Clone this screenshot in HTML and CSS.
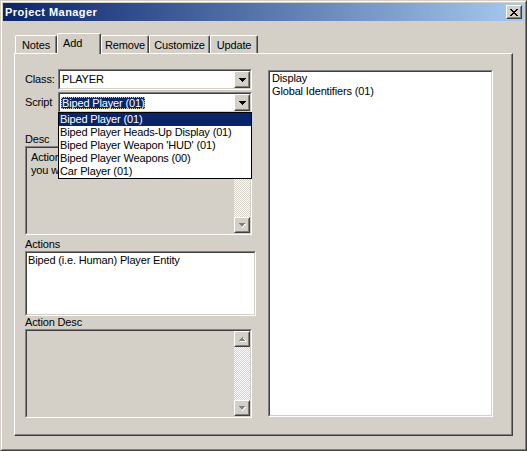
FILE: index.html
```html
<!DOCTYPE html>
<html>
<head>
<meta charset="utf-8">
<title>Project Manager</title>
<link rel="stylesheet" href="styles.css">
</head>
<body>
<div class="window">
  <div class="frame">
    <div class="titlebar">
      <span class="title">Project Manager</span>
      <div class="btn close">
        <div class="btn-in">
          <svg width="8" height="7" viewBox="0 0 8 7" shape-rendering="crispEdges"><path fill="#000" d="M0 0h2v1H0zM6 0h2v1H6zM1 1h2v1H1zM5 1h2v1H5zM2 2h4v1H2zM3 3h2v1H3zM2 4h4v1H2zM1 5h2v1H1zM5 5h2v1H5zM0 6h2v1H0zM6 6h2v1H6z"/></svg>
        </div>
      </div>
    </div>
    <div class="client">
      <div class="tabs">
        <div class="tab t-notes">Notes</div>
        <div class="tab t-add active">Add</div>
        <div class="tab t-remove">Remove</div>
        <div class="tab t-custom">Customize</div>
        <div class="tab t-update">Update</div>
      </div>
      <div class="panel">
        <div class="leftcol">
          <div class="row">
            <span class="lbl">Class:</span>
            <div class="combo">
              <div class="sunk-in white combo-in">
                <span class="combo-text">PLAYER</span>
                <div class="btn dropbtn">
                  <div class="btn-in">
                    <svg width="7" height="4" viewBox="0 0 7 4" shape-rendering="crispEdges"><path fill="#000" d="M0 0h7v1H0zM1 1h5v1H1zM2 2h3v1H2zM3 3h1v1H3z"/></svg>
                  </div>
                </div>
              </div>
            </div>
          </div>
          <div class="row row-script">
            <span class="lbl">Script</span>
            <div class="combo">
              <div class="sunk-in white combo-in">
                <span class="combo-text"><span class="sel">Biped Player (01)</span></span>
                <div class="btn dropbtn">
                  <div class="btn-in">
                    <svg width="7" height="4" viewBox="0 0 7 4" shape-rendering="crispEdges"><path fill="#000" d="M0 0h7v1H0zM1 1h5v1H1zM2 2h3v1H2zM3 3h1v1H3z"/></svg>
                  </div>
                </div>
              </div>
            </div>
            <div class="dropdown">
              <div class="item hl">Biped Player (01)</div>
              <div class="item">Biped Player Heads-Up Display (01)</div>
              <div class="item">Biped Player Weapon 'HUD' (01)</div>
              <div class="item">Biped Player Weapons (00)</div>
              <div class="item">Car Player (01)</div>
            </div>
          </div>

          <div class="label l-desc">Desc</div>
          <div class="sunk box-desc">
            <div class="sunk-in gray split">
              <div class="edit-area">Action<br>you w</div>
              <div class="vscroll">
                <div class="btn sbtn">
                  <div class="btn-in">
                    <svg width="7" height="5" viewBox="0 0 7 5" shape-rendering="crispEdges"><path fill="#fff" d="M4 1h1v1H4zM5 2h1v1H5zM6 3h1v1H6zM1 4h6v1H1z"/><path fill="#808080" d="M3 0h1v1H3zM2 1h2v1H2zM1 2h4v1H1zM0 3h6v1H0z"/></svg>
                  </div>
                </div>
                <div class="track"></div>
                <div class="btn sbtn">
                  <div class="btn-in">
                    <svg width="7" height="5" viewBox="0 0 7 5" shape-rendering="crispEdges"><path fill="#fff" d="M1 1h6v1H1zM6 1h1v1H6zM5 2h1v1H5zM4 3h1v1H4zM3 4h1v1H3z"/><path fill="#808080" d="M0 0h6v1H0zM1 1h4v1H1zM2 2h2v1H2z"/></svg>
                  </div>
                </div>
              </div>
            </div>
          </div>

          <div class="label l-actions">Actions</div>
          <div class="sunk box-actions">
            <div class="sunk-in white list-text actions-text">Biped (i.e. Human) Player Entity</div>
          </div>

          <div class="label l-adesc">Action Desc</div>
          <div class="sunk box-desc">
            <div class="sunk-in gray split">
              <div class="edit-area"></div>
              <div class="vscroll">
                <div class="btn sbtn">
                  <div class="btn-in">
                    <svg width="7" height="5" viewBox="0 0 7 5" shape-rendering="crispEdges"><path fill="#fff" d="M4 1h1v1H4zM5 2h1v1H5zM6 3h1v1H6zM1 4h6v1H1z"/><path fill="#808080" d="M3 0h1v1H3zM2 1h2v1H2zM1 2h4v1H1zM0 3h6v1H0z"/></svg>
                  </div>
                </div>
                <div class="track"></div>
                <div class="btn sbtn">
                  <div class="btn-in">
                    <svg width="7" height="5" viewBox="0 0 7 5" shape-rendering="crispEdges"><path fill="#fff" d="M1 1h6v1H1zM6 1h1v1H6zM5 2h1v1H5zM4 3h1v1H4zM3 4h1v1H3z"/><path fill="#808080" d="M0 0h6v1H0zM1 1h4v1H1zM2 2h2v1H2z"/></svg>
                  </div>
                </div>
              </div>
            </div>
          </div>
        </div>

        <div class="rightcol">
          <div class="sunk box-list">
            <div class="sunk-in white list-text right-text">Display<br>Global Identifiers (01)</div>
          </div>
        </div>
      </div>
    </div>
  </div>
</div>
</body>
</html>
```

FILE: styles.css
```css
* { box-sizing: border-box; }

html, body {
  margin: 0;
  padding: 0;
  background: #d4d0c8;
}

body {
  font-family: "Liberation Sans", Arial, sans-serif;
  font-size: 11px;
  line-height: 13px;
  letter-spacing: -0.15px;
  color: #000;
}

.window {
  width: 527px;
  height: 451px;
  border: 1px solid;
  border-color: #d4d0c8 #404040 #404040 #d4d0c8;
  background: #d4d0c8;
}

.frame {
  height: 100%;
  border: 1px solid;
  border-color: #fff #808080 #808080 #fff;
  padding: 1px;
}

.titlebar {
  height: 18px;
  display: flex;
  justify-content: space-between;
  align-items: flex-start;
  background: linear-gradient(to right, #0a246a, #a6caf0);
}

.title {
  color: #fff;
  font-weight: bold;
  padding: 3px 0 0 2px;
  letter-spacing: 0.45px;
}

/* raised button */
.btn {
  border: 1px solid;
  border-color: #fff #404040 #404040 #fff;
  background: #d4d0c8;
}
.btn-in {
  width: 100%;
  height: 100%;
  border: 1px solid;
  border-color: #d4d0c8 #808080 #808080 #d4d0c8;
  display: flex;
  align-items: center;
  justify-content: center;
}
.btn svg { display: block; }

.close {
  width: 16px;
  height: 14px;
  margin: 2px 2px 0 0;
}

.client {
  padding: 12px 11px 0 11px;
}

.tabs {
  height: 20px;
  display: flex;
  align-items: flex-end;
  padding-left: 1px;
}

.tab {
  height: 18px;
  border-top: 1px solid #fff;
  border-left: 1px solid #fff;
  border-right: 1px solid #404040;
  box-shadow: inset -1px 0 #808080;
  border-radius: 2px 2px 0 0;
  padding-top: 3px;
  text-align: center;
  background: #d4d0c8;
}
.t-notes { width: 42px; }
.t-add { width: 44px; }
.t-remove { width: 48px; }
.t-custom { width: 61px; }
.t-update { width: 48px; }

.tab.active {
  height: 21px;
  margin-bottom: -1px;
  position: relative;
  z-index: 1;
  text-align: left;
  padding-left: 5px;
}

.panel {
  width: 499px;
  height: 383px;
  border-top: 1px solid #fff;
  border-left: 1px solid #fff;
  border-right: 1px solid #404040;
  border-bottom: 1px solid #404040;
  box-shadow: inset -1px -1px #808080;
  padding: 15px 0 0 10px;
  display: flex;
  gap: 12px;
  align-items: flex-start;
}

.leftcol {
  width: 231px;
  display: flex;
  flex-direction: column;
  align-items: flex-start;
}

.row {
  display: flex;
  align-items: center;
  height: 21px;
  width: 100%;
}
.row-script {
  margin-top: 2px;
  position: relative;
}
.lbl { width: 33px; }

/* sunken box */
.sunk, .combo {
  border: 1px solid;
  border-color: #808080 #fff #fff #808080;
}
.sunk-in {
  width: 100%;
  height: 100%;
  border: 1px solid;
  border-color: #404040 #d4d0c8 #d4d0c8 #404040;
}
.white { background: #fff; }
.gray { background: #d4d0c8; }

.combo {
  width: 194px;
  height: 21px;
}
.combo-in {
  display: flex;
  align-items: stretch;
}
.combo-text {
  flex: 1;
  padding-left: 2px;
  display: flex;
  align-items: center;
  white-space: nowrap;
}
.sel {
  background: #0a246a;
  color: #fff;
  padding: 0 1px;
  line-height: 12px;
  margin-left: -1px;
  outline: 1px dotted #c8c8a0;
  outline-offset: -1px;
}
.dropbtn {
  width: 16px;
}
.dropbtn svg { margin-top: 1px; }

.dropdown {
  position: absolute;
  top: 20px;
  left: 33px;
  width: 194px;
  border: 1px solid #000;
  background: #fff;
  z-index: 5;
}
.item {
  height: 13px;
  padding-left: 1px;
  white-space: nowrap;
}
.item.hl {
  background: #0a246a;
  color: #fff;
}

.label { white-space: nowrap; }
.l-desc { margin-top: 20px; }
.l-actions { margin-top: 3px; }
.l-adesc { margin-top: 0; }

.box-desc {
  width: 227px;
  height: 89px;
}
.split {
  display: flex;
}
.edit-area {
  flex: 1;
  padding: 3px 0 0 4px;
  white-space: nowrap;
}
.vscroll {
  width: 16px;
  display: flex;
  flex-direction: column;
}
.sbtn {
  width: 16px;
  height: 16px;
  flex: none;
}
.track {
  flex: 1;
  background: repeating-conic-gradient(#fff 0 25%, #d4d0c8 0 50%) 0 0 / 2px 2px;
}

.box-actions {
  width: 231px;
  height: 65px;
}
.actions-text {
  padding: 1px 0 0 1px;
  white-space: nowrap;
}

.rightcol {
  margin-top: 1px;
}
.box-list {
  width: 225px;
  height: 347px;
}
.right-text {
  padding: 0 0 0 2px;
  white-space: nowrap;
}
```
